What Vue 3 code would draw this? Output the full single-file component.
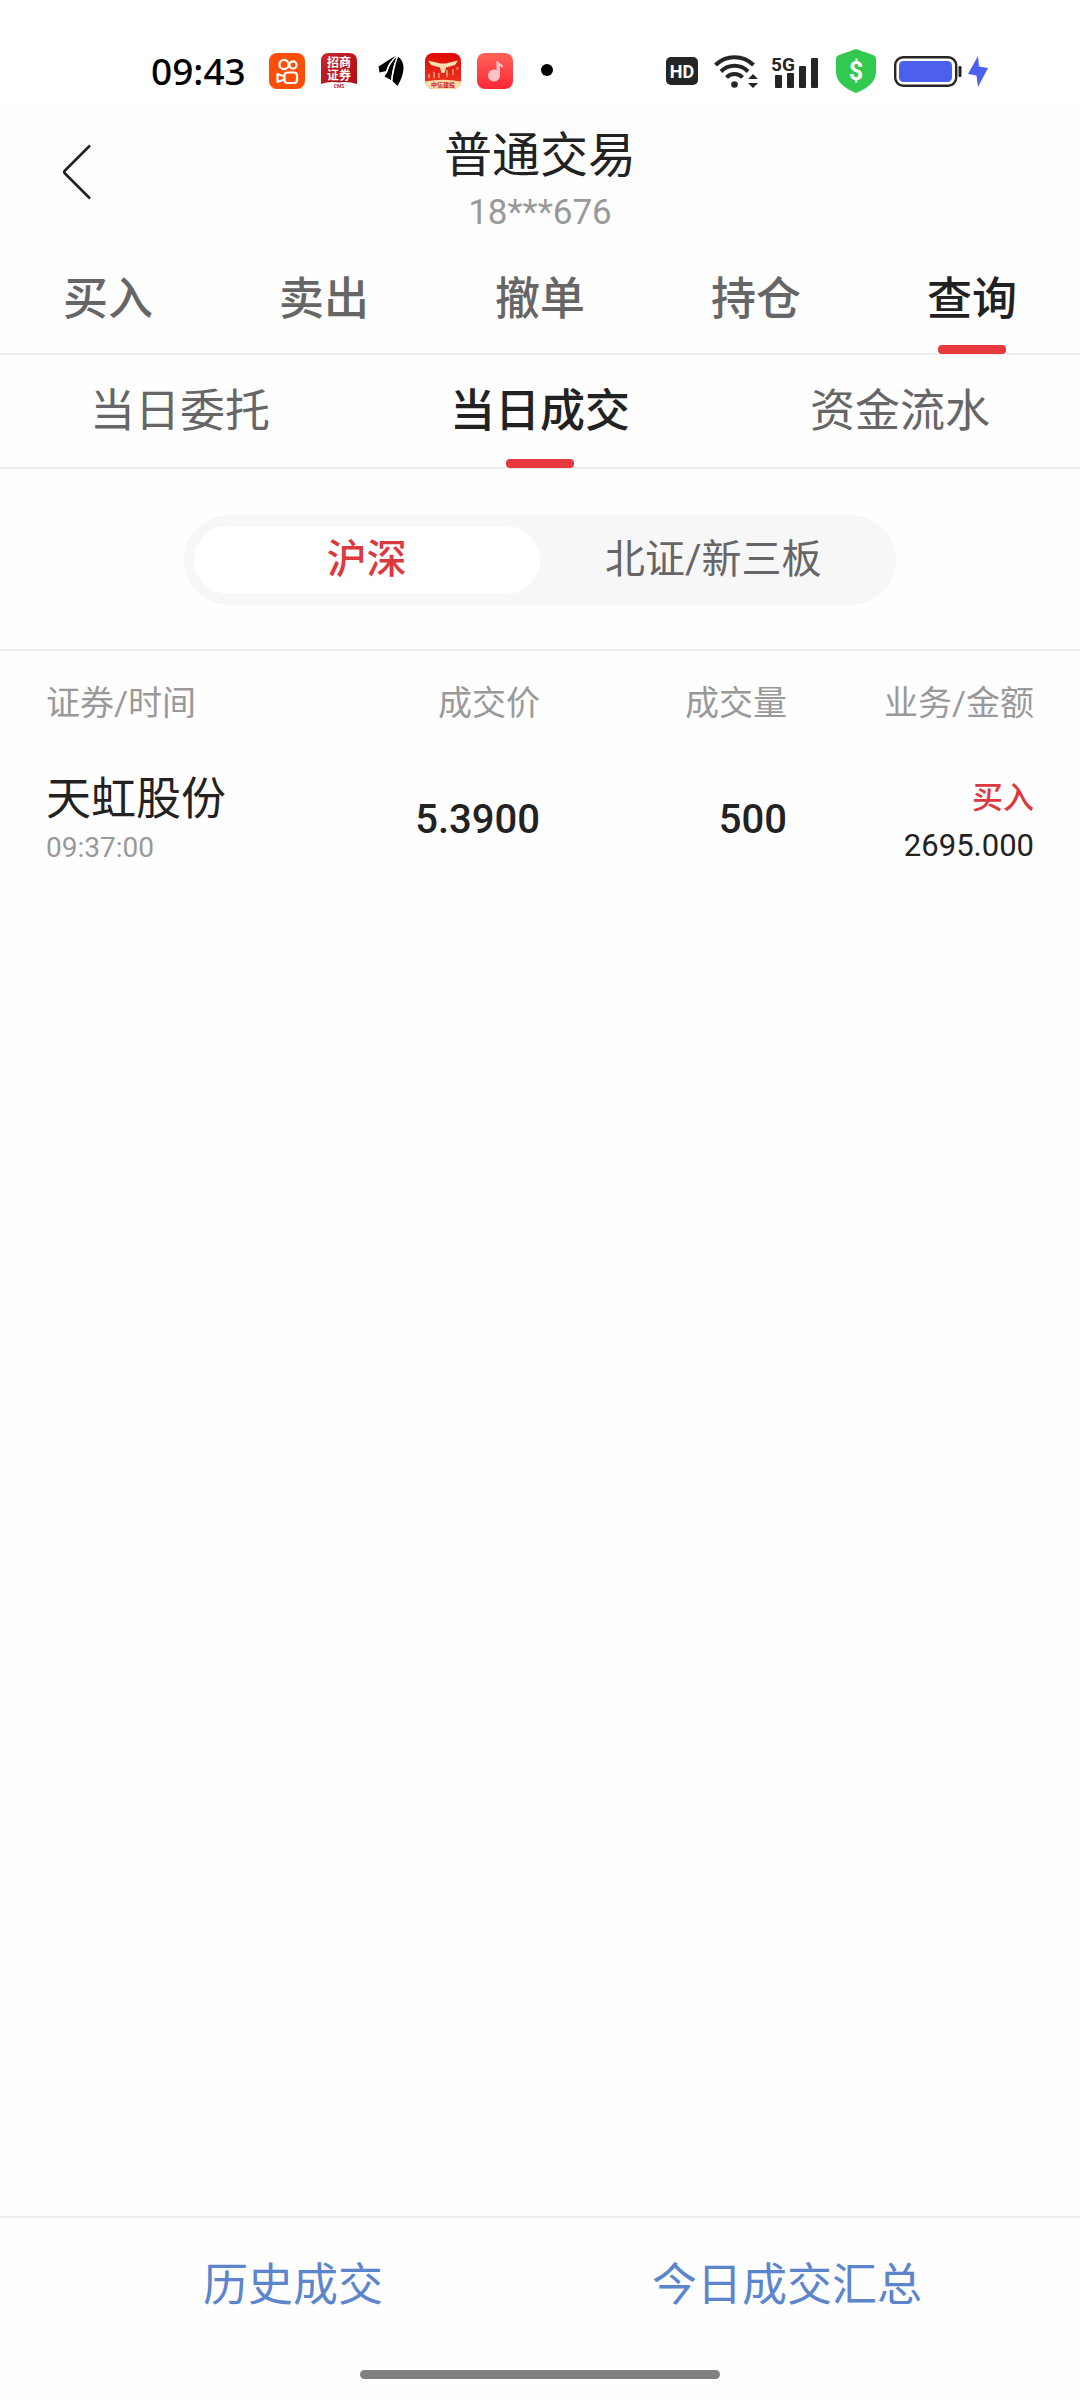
<template>
  <div class="page">
    <div class="status-bar">
      <span class="clock">09:43</span>
      <div class="app-icons">
        <svg class="app-icon" viewBox="0 0 36 36">
          <rect width="36" height="36" rx="8" fill="#ff4e08" />
          <g fill="none" stroke="#fff" stroke-width="2.2">
            <circle cx="15" cy="11.500" r="4.600" />
            <circle cx="24" cy="12" r="3.600" />
            <rect x="15.500" y="19.500" width="12.500" height="10.500" rx="3" />
            <path d="M15.500 23.500L8.500 21V29L15.500 26.500" stroke-linejoin="round" />
          </g>
        </svg>
        <svg class="app-icon" viewBox="0 0 36 36">
          <defs>
            <linearGradient id="cmsBg" x1="0" y1="0" x2="1" y2="1">
              <stop offset="0" stop-color="#c9282c" />
              <stop offset="1" stop-color="#a80c12" />
            </linearGradient>
          </defs>
          <path d="M8 0H28Q36 0 36 8V31Q27 28 18 29.500Q8 28 0 31V8Q0 0 8 0Z" fill="url(#cmsBg)" />
          <text x="18" y="13.500" class="glyph" font-size="12" fill="#fff">招商</text>
          <text x="18" y="26.500" class="glyph" font-size="12" fill="#fff">证券</text>
          <text x="18" y="34.800" class="glyph" font-size="5" fill="#b8272c">CMS</text>
        </svg>
        <svg class="app-icon" viewBox="0 0 36 36">
          <path d="M23 3C17 5.500 11 10.500 5.500 13.500L6.500 19.500L13 18C14.500 12 18 7 23 3Z" />
          <path d="M24 3.500C19 8 16 13 14.500 19L11.500 23.500L18 27C19 19 20.500 11 24 3.500Z" />
          <path d="M25 3.500C22 12 20.500 20 19.500 28L24.500 33C28 27 30.500 21 30.500 14.500C30.500 10 28.500 6 25 3.500Z" />
          <path d="M24.500 3C17 9 15 14 13 20M25 3C20.500 12 19.500 20 18.500 28" fill="none" stroke="#fff" stroke-width="1" />
        </svg>
        <svg class="app-icon" viewBox="0 0 36 36">
          <defs>
            <linearGradient id="citicBg" x1="0" y1="0" x2="0" y2="1">
              <stop offset="0" stop-color="#dd0a05" />
              <stop offset="1" stop-color="#f03a24" />
            </linearGradient>
          </defs>
          <rect width="36" height="36" rx="8" fill="url(#citicBg)" />
          <path d="M0 28.500Q18 25 36 28.500Q36 36 28 36H8Q0 36 0 28.500Z" fill="#fbdca6" />
          <path d="M3 7.500L15.500 10.500H20.500L33 7.500L30 12L21 14.500L19.500 20H16.500L15 14.500L6 12Z" fill="#f8dfb0" />
          <path d="M4 21V25M9 19V25M14 20V25M22 17V24M28 16V22M32.500 14V17" stroke="#f4806a" stroke-width="2" />
          <text x="18" y="34" class="glyph" font-size="6" fill="#c22">中信建投</text>
        </svg>
        <svg class="app-icon" viewBox="0 0 36 36">
          <defs>
            <linearGradient id="musicBg" x1="0" y1="0" x2="0" y2="1">
              <stop offset="0" stop-color="#ff6259" />
              <stop offset="1" stop-color="#fb2838" />
            </linearGradient>
          </defs>
          <rect width="36" height="36" rx="8" fill="url(#musicBg)" />
          <circle cx="17" cy="22.500" r="6" fill="#ffc4c6" />
          <path d="M19.500 7.500L26 12.500V14.500L23 13V22.500H19.500Z" fill="#ffc4c6" />
        </svg>
        <svg class="app-icon" viewBox="0 0 36 36">
          <circle cx="18" cy="17" r="6" />
        </svg>
      </div>
      <div class="system-icons">
        <svg width="32" height="28" viewBox="0 0 32 28">
          <rect width="32" height="28" rx="5" fill="#252525" />
          <text x="16" y="21" class="glyph" font-size="18" fill="#fff">HD</text>
        </svg>
        <svg class="wifi" width="44" height="34" viewBox="0 0 44 34">
          <g fill="none" stroke="#252525" stroke-width="4">
            <path d="M1.500 11A27 27 0 0 1 39.500 11" />
            <path d="M7 17.500A19 19 0 0 1 34 17.500" />
            <path d="M12.500 23.500A11 11 0 0 1 28.500 23.500" />
          </g>
          <circle cx="20.500" cy="30.500" r="3.300" fill="#252525" />
          <path d="M34 25L39 20L44 25ZM34 29L39 34L44 29Z" fill="#252525" />
        </svg>
        <svg class="signal" width="48" height="45" viewBox="0 0 48 45">
          <text x="12" y="22" class="glyph" font-size="19" fill="#252525">5G</text>
          <g fill="#252525">
            <rect x="4" y="26" width="7" height="13" rx="1" />
            <rect x="16" y="24" width="7" height="15" rx="1" />
            <rect x="28" y="17" width="7" height="22" rx="1" />
            <rect x="40" y="9" width="7" height="30" rx="1" />
          </g>
        </svg>
        <svg class="shield" width="40" height="44" viewBox="0 0 40 44">
          <path d="M20 0L37 6Q40 7 40 10V23Q40 36 20 44Q0 36 0 23V10Q0 7 3 6Z" fill="#31c94f" />
          <text x="20" y="30.500" class="glyph" font-size="25" fill="#fff">$</text>
        </svg>
        <svg class="battery" width="68" height="31" viewBox="0 0 68 31">
          <rect x="1.200" y="1.200" width="61" height="28.600" rx="8" fill="#fff" stroke="#252525" stroke-width="2.400" />
          <rect x="5" y="5" width="53" height="21" rx="4.500" fill="#4c5fee" />
          <rect x="64.500" y="10" width="3" height="11" rx="1.200" fill="#252525" />
        </svg>
        <svg width="20" height="31" viewBox="0 0 20 31">
          <path d="M10 0L0 18L8.500 19.500L10 31L20 12L11 10.500Z" fill="#4c5fee" />
        </svg>
      </div>
    </div>

    <header class="header">
      <button class="back-btn" aria-label="返回">
        <svg width="30" height="56" viewBox="0 0 30 56">
          <path d="M28 1.500L3 26.500Q1.500 28 3 29.500L28 54.500" fill="none" stroke="#222" stroke-width="2.600" />
        </svg>
      </button>
      <h1 class="title">普通交易</h1>
      <div class="account">18***676</div>
    </header>

    <nav class="tabs main-tabs">
      <button
        v-for="tab in mainTabs"
        :key="tab"
        class="tab"
        :class="{ active: tab === mainTab }"
        @click="mainTab = tab"
      >{{ tab }}</button>
    </nav>

    <nav class="tabs sub-tabs">
      <button
        v-for="tab in subTabs"
        :key="tab"
        class="tab"
        :class="{ active: tab === subTab }"
        @click="subTab = tab"
      >{{ tab }}</button>
    </nav>

    <div class="market-wrapper">
      <div class="market-switch">
        <button
          v-for="item in markets"
          :key="item"
          class="market-btn"
          :class="{ active: item === market }"
          @click="market = item"
        >{{ item }}</button>
      </div>
    </div>

    <table class="deal-table">
      <thead>
        <tr>
          <th class="col-name">证券/时间</th>
          <th class="col-num">成交价</th>
          <th class="col-num">成交量</th>
          <th class="col-num">业务/金额</th>
        </tr>
      </thead>
      <tbody>
        <tr v-for="deal in deals" :key="deal.time">
          <td class="col-name">
            <div class="stock-name">{{ deal.name }}</div>
            <div class="deal-time">{{ deal.time }}</div>
          </td>
          <td class="number">{{ deal.price }}</td>
          <td class="number">{{ deal.volume }}</td>
          <td>
            <div class="deal-type">{{ deal.type }}</div>
            <div class="deal-amount">{{ deal.amount }}</div>
          </td>
        </tr>
      </tbody>
    </table>

    <footer class="footer">
      <div class="footer-links">
        <a href="#history" class="footer-link">历史成交</a>
        <a href="#summary" class="footer-link">今日成交汇总</a>
      </div>
      <div class="home-bar"></div>
    </footer>
  </div>
</template>

<script setup>
import { ref } from 'vue'

const mainTabs = ['买入', '卖出', '撤单', '持仓', '查询']
const subTabs = ['当日委托', '当日成交', '资金流水']
const markets = ['沪深', '北证/新三板']

const mainTab = ref('查询')
const subTab = ref('当日成交')
const market = ref('沪深')

const deals = ref([
  { name: '天虹股份', time: '09:37:00', price: '5.3900', volume: '500', type: '买入', amount: '2695.000' }
])
</script>

<style>
body {
  margin: 0;
  background: #fefefe;
}
</style>

<style scoped>
.page {
  min-height: 100vh;
  display: flex;
  flex-direction: column;
  background: #fefefe;
  color: #222;
  font-family: Roboto, "Noto Sans CJK SC", sans-serif;
}
button {
  padding: 0;
  border: none;
  background: none;
  font-family: inherit;
  cursor: pointer;
}
svg {
  display: block;
}
.glyph {
  font-family: Roboto, "Noto Sans CJK SC", sans-serif;
  font-weight: bold;
  text-anchor: middle;
}

/* 状态栏 */
.status-bar {
  height: 44px;
  padding: 49px 92px 17px 151px;
  display: flex;
  align-items: center;
  background: #fff;
}
.clock {
  color: #000;
  font-family: "Noto Sans", sans-serif;
  font-size: 37px;
  line-height: 44px;
  font-weight: 500;
}
.app-icons {
  display: flex;
  gap: 16px;
  margin-left: 23px;
}
.app-icon {
  width: 36px;
  height: 36px;
}
.system-icons {
  display: flex;
  align-items: center;
  margin-left: auto;
}
.wifi {
  margin-left: 16px;
}
.signal {
  margin-left: 13px;
}
.shield {
  margin-left: 17px;
}
.battery {
  margin: 0 6px 0 18px;
}

/* 标题 */
.header {
  position: relative;
  height: 106px;
  padding-top: 20px;
  text-align: center;
  background: #fdfdfd;
}
.back-btn {
  position: absolute;
  left: 62px;
  top: 34px;
}
.title {
  margin: 0;
  font-size: 48px;
  line-height: 52px;
  font-weight: 400;
}
.account {
  margin-top: 11px;
  color: #999;
  font-size: 35px;
  line-height: 40px;
}

/* 选项卡 */
.tabs {
  display: flex;
  border-bottom: 2px solid #ededed;
}
.tab {
  position: relative;
  flex: 1;
  color: #666;
  font-size: 45px;
  line-height: 60px;
}
.main-tabs .tab {
  padding: 34px 0 23px;
  font-weight: 500;
}
.sub-tabs .tab {
  padding: 27px 0 25px;
}
.tab.active {
  color: #222;
  font-weight: 500;
}
.tab.active::after {
  content: '';
  position: absolute;
  left: 50%;
  bottom: -1px;
  width: 68px;
  height: 9px;
  margin-left: -34px;
  border-radius: 4px;
  background: #e8393f;
}

/* 市场切换 */
.market-wrapper {
  display: flex;
  justify-content: center;
  padding: 46px 0 44px;
  border-bottom: 2px solid #ededed;
}
.market-switch {
  width: 66%;
  box-sizing: border-box;
  display: flex;
  padding: 11px 10px;
  border-radius: 46px;
  background: #f7f7f7;
}
.market-btn {
  flex: 1;
  border-radius: 34px;
  color: #666;
  font-size: 40px;
  line-height: 68px;
}
.market-btn.active {
  background: #fff;
  color: #dc393e;
  font-weight: 500;
}

/* 成交列表 */
.deal-table {
  width: 100%;
  padding: 0 46px;
  border-collapse: separate;
  border-spacing: 0;
  table-layout: fixed;
}
.deal-table th,
.deal-table td {
  padding: 0;
  text-align: right;
  vertical-align: top;
}
.deal-table th {
  color: #999;
  font-size: 34px;
  line-height: 104px;
  font-weight: 400;
}
.deal-table .col-name {
  text-align: left;
}
.col-num {
  width: 25%;
}
.stock-name {
  margin-top: 15px;
  font-size: 45px;
  line-height: 60px;
}
.deal-time {
  color: #999;
  font-size: 28px;
  line-height: 36px;
}
.deal-table .number {
  padding-top: 35px;
  font-size: 40px;
  line-height: 60px;
  font-weight: 500;
}
.deal-type,
.deal-amount {
  font-size: 31px;
  line-height: 48px;
}
.deal-type {
  margin-top: 19px;
  color: #dc393e;
  font-weight: 500;
}

/* 底部 */
.footer {
  margin-top: auto;
  border-top: 2px solid #ededed;
}
.footer-links {
  display: flex;
  padding: 38px 46px 34px;
}
.footer-link {
  flex: 1;
  color: #5c85cc;
  font-size: 45px;
  line-height: 60px;
  text-align: center;
  text-decoration: none;
}
.home-bar {
  width: 33.33%;
  height: 9px;
  margin: 20px auto 21px;
  border-radius: 5px;
  background: #808080;
}
</style>
